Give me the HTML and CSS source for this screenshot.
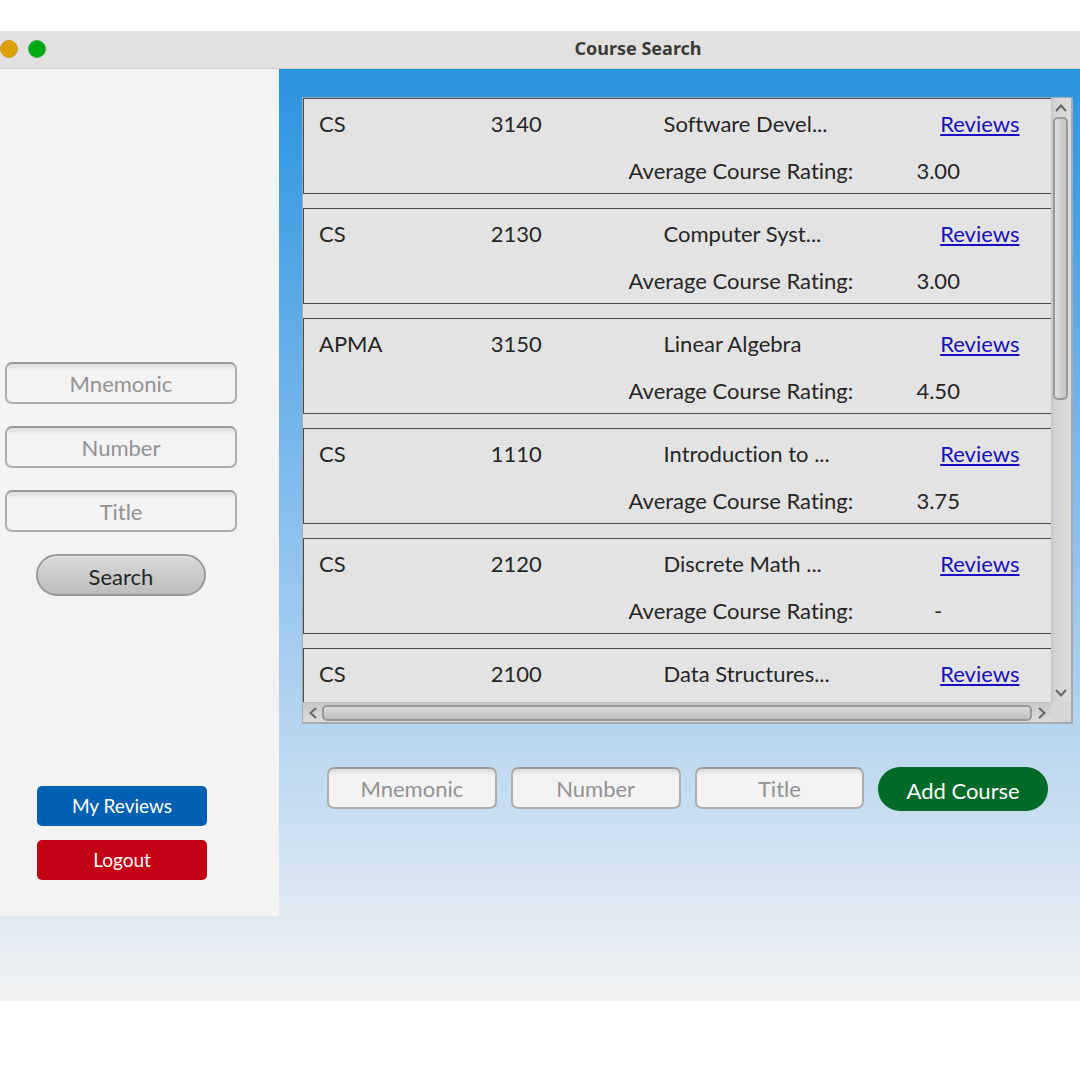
FILE: index.html
```html
<!DOCTYPE html>
<html lang="en">
<head>
<meta charset="utf-8">
<title>Course Search</title>
<link rel="stylesheet" href="styles.css">
</head>
<body>
<div class="window">
  <header class="titlebar">
    <div class="lights">
      <button class="light minimize" type="button" aria-label="Minimize"></button>
      <button class="light maximize" type="button" aria-label="Maximize"></button>
    </div>
    <h1 class="title">Course Search</h1>
  </header>
  <div class="app">
    <aside class="sidebar">
      <form class="search">
        <input class="field" type="text" placeholder="Mnemonic" aria-label="Mnemonic">
        <input class="field" type="text" placeholder="Number" aria-label="Number">
        <input class="field" type="text" placeholder="Title" aria-label="Title">
        <button class="search-button" type="button">Search</button>
      </form>
      <nav class="account">
        <button class="account-button reviews" type="button">My Reviews</button>
        <button class="account-button logout" type="button">Logout</button>
      </nav>
    </aside>
    <main class="main">
      <section class="scroll-pane" aria-label="Courses">
        <ul class="courses">
          <li class="course">
            <div class="course-info"><span>CS</span><span>3140</span><span>Software Devel...</span><a href="#">Reviews</a></div>
            <div class="course-rating"><span>Average Course Rating:</span><span class="score">3.00</span></div>
          </li>
          <li class="course">
            <div class="course-info"><span>CS</span><span>2130</span><span>Computer Syst...</span><a href="#">Reviews</a></div>
            <div class="course-rating"><span>Average Course Rating:</span><span class="score">3.00</span></div>
          </li>
          <li class="course">
            <div class="course-info"><span>APMA</span><span>3150</span><span>Linear Algebra</span><a href="#">Reviews</a></div>
            <div class="course-rating"><span>Average Course Rating:</span><span class="score">4.50</span></div>
          </li>
          <li class="course">
            <div class="course-info"><span>CS</span><span>1110</span><span>Introduction to ...</span><a href="#">Reviews</a></div>
            <div class="course-rating"><span>Average Course Rating:</span><span class="score">3.75</span></div>
          </li>
          <li class="course">
            <div class="course-info"><span>CS</span><span>2120</span><span>Discrete Math ...</span><a href="#">Reviews</a></div>
            <div class="course-rating"><span>Average Course Rating:</span><span class="score">-</span></div>
          </li>
          <li class="course clipped">
            <div class="course-info"><span>CS</span><span>2100</span><span>Data Structures...</span><a href="#">Reviews</a></div>
          </li>
        </ul>
        <div class="bar vertical">
          <button class="arrow" type="button" aria-label="Scroll up"><svg width="12" height="8" viewBox="0 0 12 8"><path d="M1 7 6 1.500 11 7"/></svg></button>
          <div class="track"><div class="thumb"></div></div>
          <button class="arrow" type="button" aria-label="Scroll down"><svg width="12" height="8" viewBox="0 0 12 8"><path d="M1 1 6 6.500 11 1"/></svg></button>
        </div>
        <div class="bar horizontal">
          <button class="arrow" type="button" aria-label="Scroll left"><svg width="8" height="12" viewBox="0 0 8 12"><path d="M7 1 1.500 6 7 11"/></svg></button>
          <div class="track"><div class="thumb"></div></div>
          <button class="arrow" type="button" aria-label="Scroll right"><svg width="8" height="12" viewBox="0 0 8 12"><path d="M1 1 6.500 6 1 11"/></svg></button>
        </div>
        <div class="corner"></div>
      </section>
      <form class="add">
        <input class="field" type="text" placeholder="Mnemonic" aria-label="New course mnemonic">
        <input class="field" type="text" placeholder="Number" aria-label="New course number">
        <input class="field" type="text" placeholder="Title" aria-label="New course title">
        <button class="add-button" type="button">Add Course</button>
      </form>
    </main>
  </div>
</div>
</body>
</html>
```
FILE: styles.css
```css
* {
  box-sizing: border-box;
}

body {
  margin: 0;
  background: #fff;
  color: #262626;
  font: 22px/30px Lato, "Open Sans", sans-serif;
  font-variant-ligatures: none;
}

button,
input {
  margin: 0;
  padding: 0;
  border: 0;
  font: inherit;
  color: inherit;
}

.window {
  padding-top: 31px;
}

.titlebar {
  display: grid;
  grid-template-columns: 196px 1fr;
  align-items: center;
  height: 38px;
  background: #e2e1df;
  border-bottom: 1px solid #cfcfcf;
}

.lights {
  display: flex;
  gap: 10px;
  padding-bottom: 2px;
}

.light {
  width: 18px;
  height: 18px;
  border-radius: 50%;
}

.minimize {
  background: #dca000;
  border: 1px solid #d0983a;
}

.maximize {
  background: #00a812;
  border: 1px solid #3cac48;
}

.title {
  margin: 0;
  padding-bottom: 3px;
  font: bold 18px/24px "Noto Sans", sans-serif;
  text-align: center;
  color: #3a3a39;
}

.app {
  display: grid;
  grid-template-columns: 279px 1fr;
  align-items: start;
  padding-bottom: 85px;
  background: linear-gradient(#2893e0, #8cc0ee 50%, #f2f2f2);
}

.sidebar {
  display: grid;
  gap: 190px;
  padding: 293px 42px 36px 5px;
  background: #f3f3f3;
}

.search {
  display: grid;
  gap: 22px;
}

.field {
  width: 100%;
  min-width: 0;
  height: 42px;
  border: 2px solid #adadad;
  border-top-color: #999;
  border-radius: 7px;
  background: linear-gradient(#dcdcdc, #f3f3f3 7px);
  text-align: center;
}

.field::placeholder {
  color: #929292;
  opacity: 1;
}

.search-button {
  justify-self: center;
  width: 170px;
  height: 42px;
  padding-top: 4px;
  border: 2px solid #999;
  border-radius: 21px;
  background: linear-gradient(#d9d9d9, #bdbdbd);
  box-shadow: inset 0 1px #e8e8e8;
  line-height: 34px;
}

.account {
  display: grid;
  gap: 14px;
  padding: 0 30px 0 32px;
}

.account-button {
  height: 40px;
  border-radius: 5px;
  color: #fff;
  font-size: 19px;
}

.reviews {
  background: #0061b3;
}

.logout {
  background: #c40014;
}

.main {
  display: grid;
  gap: 43px;
  padding: 28px 7px 0 23px;
}

.scroll-pane {
  display: grid;
  grid-template-columns: 1fr 20px;
  border: 1px solid #aaa;
  border-right-width: 2px;
  border-bottom-width: 2px;
  background: #e2e2e2;
}

.courses {
  display: grid;
  gap: 14px;
  margin: 0;
  padding: 0;
  overflow: hidden;
  list-style: none;
}

.course {
  width: calc(100% + 20px);
  height: 96px;
  padding: 9px 0 0 15px;
  border: 1px solid #4a4a4a;
  background: #e3e3e3;
}

.clipped {
  height: 54px;
  border-bottom: 0;
}

.course-info {
  display: grid;
  grid-template-columns: 172fr 173fr 277fr 130fr;
  line-height: 32px;
}

.course-info a {
  color: #1a0fc0;
  text-decoration-thickness: 2px;
  text-underline-offset: 2px;
}

.course-rating {
  display: grid;
  grid-template-columns: 535fr 170fr 47fr;
  padding-top: 15px;
  line-height: 32px;
  text-align: right;
}

.score {
  text-align: center;
}

.bar {
  display: grid;
}

.vertical {
  grid-template-rows: 19px 1fr 19px;
  padding: 0 3px 0 2px;
  background: linear-gradient(90deg, #c4c4c4, #d4d4d4 4px, #dcdcdc);
}

.horizontal {
  grid-template-columns: 19px 1fr 19px;
  padding: 2px 0 1px;
  border-top: 1px solid #c0c0c0;
  background: linear-gradient(#c8c8c8, #dcdcdc);
}

.corner {
  background: #d5d5d5;
}

.arrow {
  display: grid;
  place-items: center;
  background: none;
}

.arrow path {
  fill: none;
  stroke: #666;
  stroke-width: 2;
}

.track {
  display: flex;
}

.thumb {
  border: 2px solid #999;
  border-radius: 5px;
}

.vertical .thumb {
  width: 100%;
  height: 50%;
  background: linear-gradient(90deg, #e0e0e0, #c4c4c4);
}

.horizontal .thumb {
  width: 100%;
  height: 16px;
  background: linear-gradient(#dcdcdc, #bdbdbd);
}

.add {
  display: grid;
  grid-template-columns: repeat(4, 1fr);
  gap: 14px;
  padding: 0 25px;
}

.add-button {
  height: 44px;
  padding-top: 4px;
  border-radius: 22px;
  background: #006b28;
  color: #fff;
}
```
